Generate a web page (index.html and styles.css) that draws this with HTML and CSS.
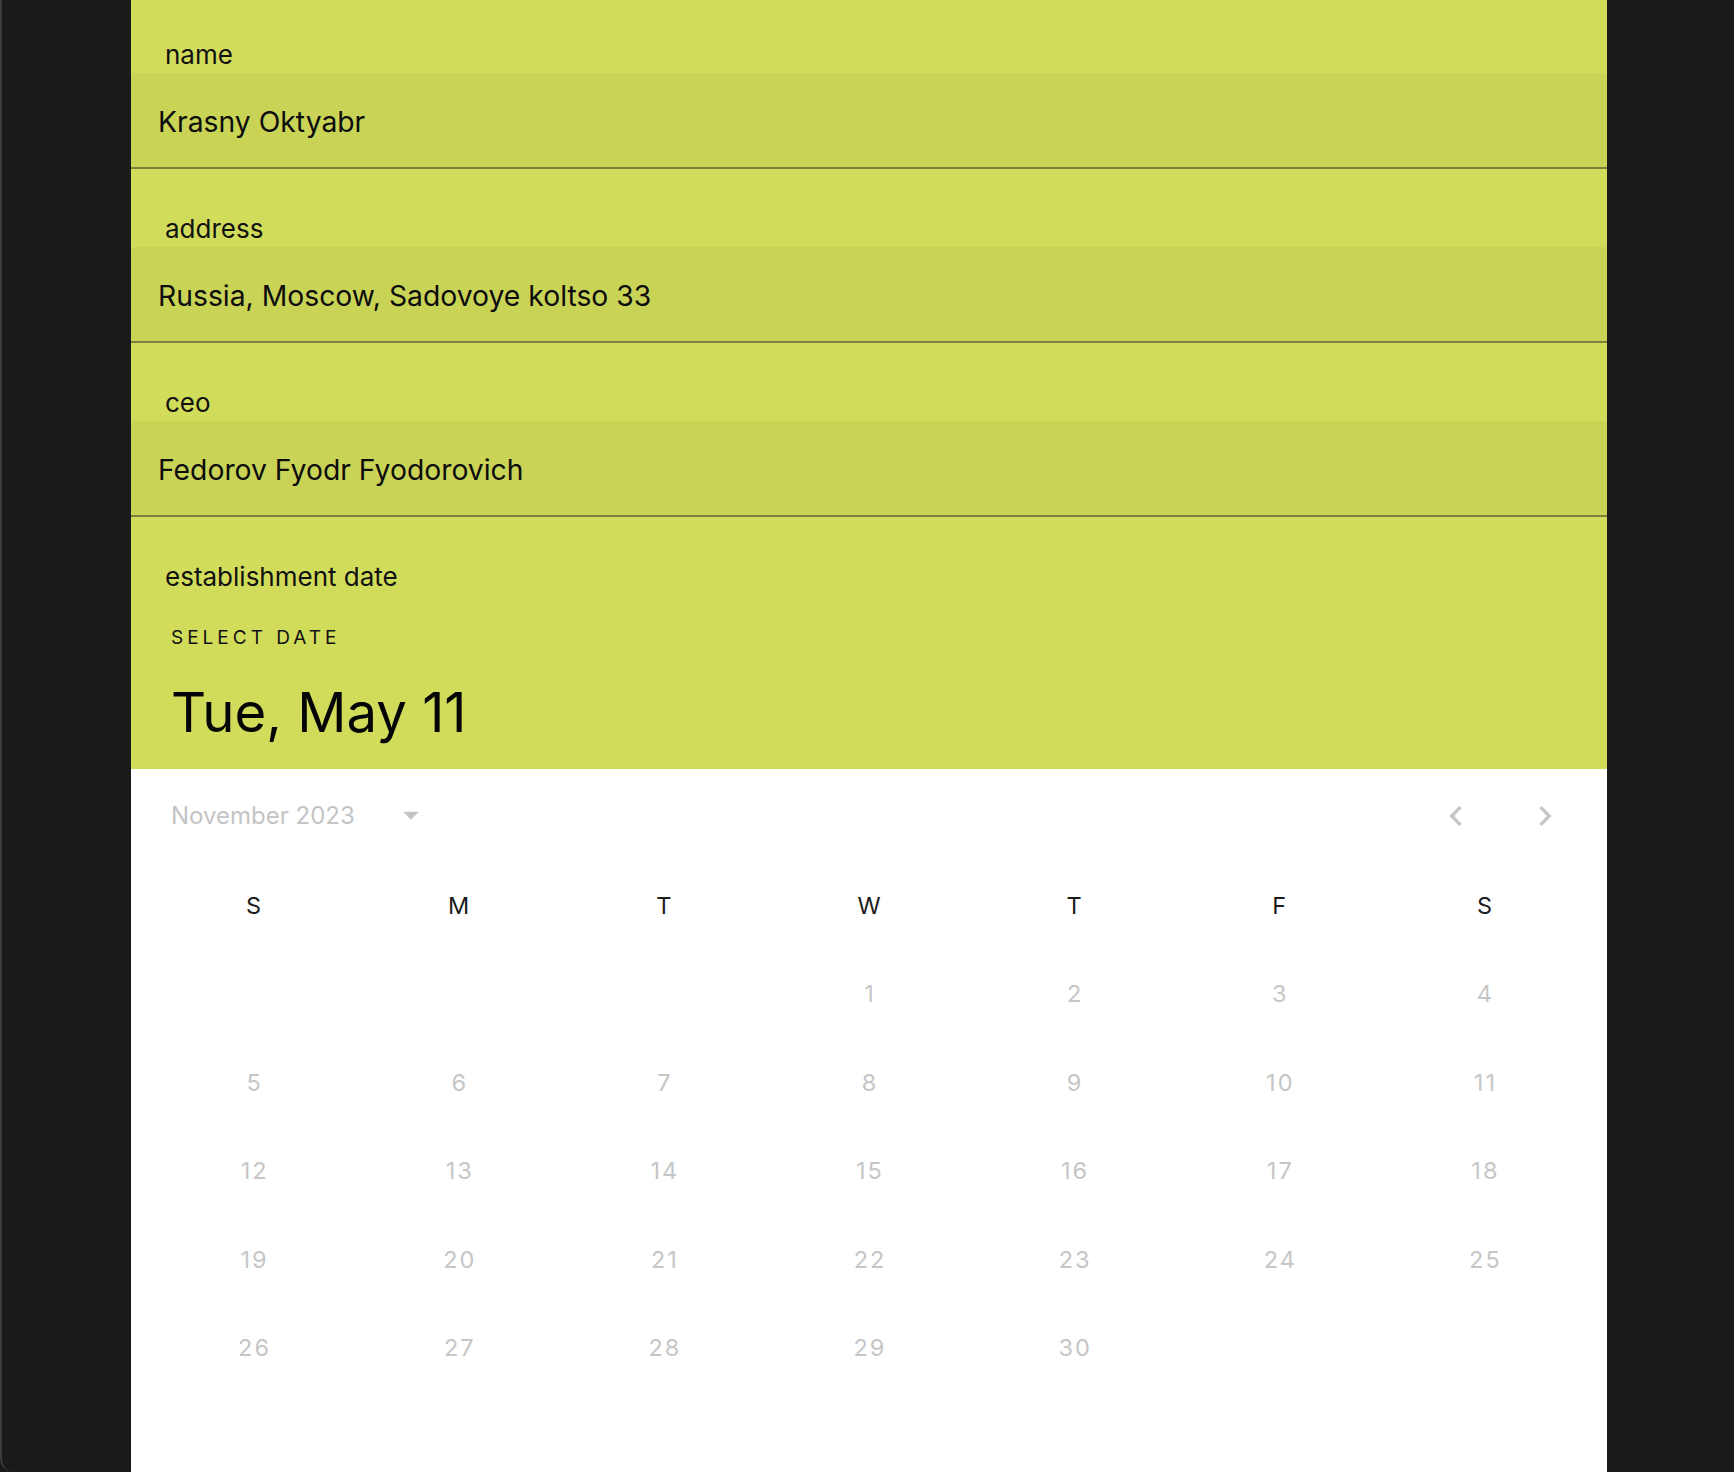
FILE: index.html
```html
<!DOCTYPE html>
<html lang="en">
<head>
<meta charset="utf-8">
<title>Company form</title>
<link rel="stylesheet" href="styles.css">
</head>
<body>
<div class="frame">
  <div class="panel">
    <div class="section section--first">
      <div class="label">name</div>
      <div class="field">Krasny Oktyabr</div>
    </div>
    <div class="section">
      <div class="label">address</div>
      <div class="field">Russia, Moscow, Sadovoye koltso 33</div>
    </div>
    <div class="section">
      <div class="label">ceo</div>
      <div class="field">Fedorov Fyodr Fyodorovich</div>
    </div>
    <div class="date-section">
      <div class="label">establishment date</div>
      <div class="picker-title">SELECT DATE</div>
      <div class="picker-date">Tue, May 11</div>
    </div>
    <div class="calendar">
      <div class="month-row">
        <div class="month-select">
          <span class="month-name">November 2023</span>
          <svg class="drop-icon" viewBox="0 0 24 24"><path d="M7 10l5 5 5-5z"/></svg>
        </div>
        <div class="nav">
          <svg class="nav-icon" viewBox="0 0 24 24"><path d="M15.41 7.41L14 6l-6 6 6 6 1.41-1.41L10.83 12z"/></svg>
          <svg class="nav-icon" viewBox="0 0 24 24"><path d="M10 6L8.59 7.41 13.17 12l-4.58 4.59L10 18l6-6z"/></svg>
        </div>
      </div>
      <div class="grid">
        <div class="dow">S</div><div class="dow">M</div><div class="dow">T</div><div class="dow">W</div><div class="dow">T</div><div class="dow">F</div><div class="dow">S</div>
        <div class="day"></div><div class="day"></div><div class="day"></div><div class="day">1</div><div class="day">2</div><div class="day">3</div><div class="day">4</div>
        <div class="day">5</div><div class="day">6</div><div class="day">7</div><div class="day">8</div><div class="day">9</div><div class="day">10</div><div class="day">11</div>
        <div class="day">12</div><div class="day">13</div><div class="day">14</div><div class="day">15</div><div class="day">16</div><div class="day">17</div><div class="day">18</div>
        <div class="day">19</div><div class="day">20</div><div class="day">21</div><div class="day">22</div><div class="day">23</div><div class="day">24</div><div class="day">25</div>
        <div class="day">26</div><div class="day">27</div><div class="day">28</div><div class="day">29</div><div class="day">30</div><div class="day"></div><div class="day"></div>
      </div>
    </div>
  </div>
</div>
</body>
</html>
```

FILE: styles.css
```css
html, body {
  margin: 0;
  padding: 0;
  background: #1a1a1a;
  height: 1472px;
  overflow: hidden;
}

body {
  font-family: "Inter", "Liberation Sans", sans-serif;
  color: #111;
}

.frame {
  box-sizing: border-box;
  height: 1472px;
  border-left: 2px solid #3c3c3c;
  border-bottom-left-radius: 14px;
  background: #1a1a1a;
  padding-left: 129px;
}

.panel {
  width: 1476px;
  height: 1472px;
  background: #ffffff;
  display: flex;
  flex-direction: column;
}

.section {
  background: #d2dc5b;
}

.label {
  box-sizing: border-box;
  height: 78px;
  padding: 45px 0 3px 34px;
  font-size: 26px;
  line-height: 30px;
  color: #111;
}

.section--first .label {
  height: 73px;
  padding-top: 40px;
}

.field {
  box-sizing: border-box;
  height: 96px;
  padding: 32px 0 0 27px;
  background: #c9d457;
  border-bottom: 2px solid #7c803b;
  border-radius: 4px 4px 0 0;
  font-size: 28.3px;
  line-height: 34px;
  color: #0d0d0d;
}

.date-section {
  background: #d2dc5b;
  padding-bottom: 25px;
}

.picker-title {
  margin: 31px 0 0 40px;
  font-size: 19px;
  line-height: 24px;
  letter-spacing: 4px;
  color: #111;
}

.picker-date {
  margin: 30px 0 0 40px;
  font-size: 54.5px;
  line-height: 64px;
  color: #050505;
}

.calendar {
  flex: 1;
  background: #ffffff;
  padding: 15px 42px 0 20px;
}

.month-row {
  height: 64px;
  display: flex;
  align-items: center;
  justify-content: space-between;
}

.month-select {
  display: flex;
  align-items: center;
  padding-left: 20px;
  gap: 37px;
}

.month-name {
  font-size: 24px;
  line-height: 32px;
  color: #c4c4c4;
}

.drop-icon {
  width: 38px;
  height: 38px;
  fill: #c4c4c4;
  margin-top: -2px;
}

.nav {
  display: flex;
  gap: 49px;
}

.nav-icon {
  width: 40px;
  height: 40px;
  fill: #c6c6c6;
}

.grid {
  margin-top: 13px;
  width: 1436px;
  display: grid;
  grid-template-columns: repeat(7, 1fr);
  grid-auto-rows: 88.5px;
}

.dow, .day {
  display: flex;
  align-items: center;
  justify-content: center;
  font-size: 23.5px;
}

.dow {
  color: #1c1c1c;
}

.day {
  color: #c6c6c6;
  letter-spacing: 2px;
  padding-left: 2px;
}
```
